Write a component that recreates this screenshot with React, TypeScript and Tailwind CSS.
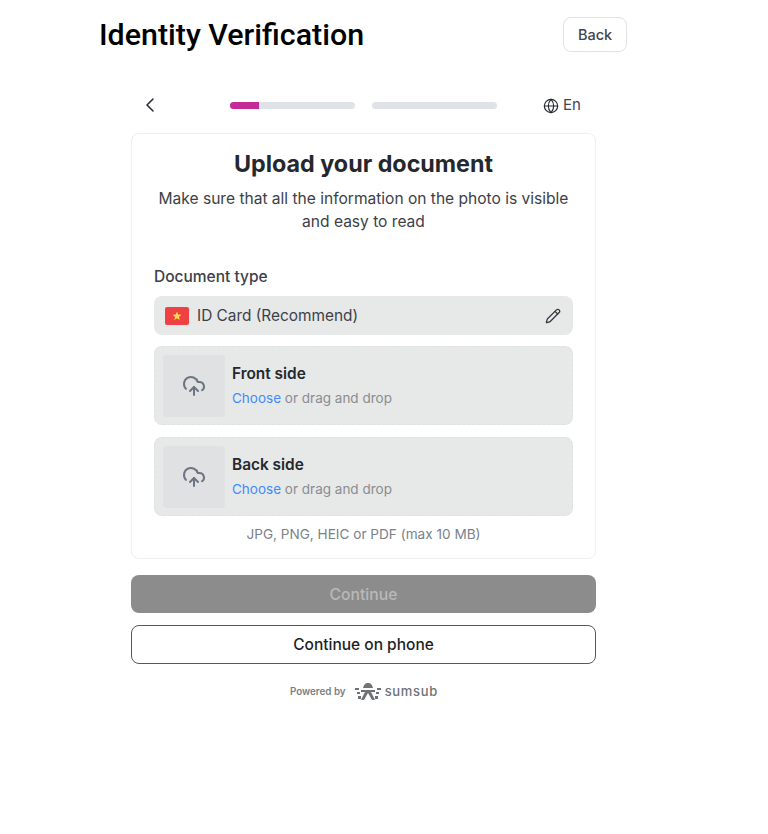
import { ChevronLeft, Globe, Pencil, CloudUpload } from "lucide-react";

function UploadBox({ label }: { label: string }) {
  return (
    <div className="flex h-[79px] items-center rounded-lg border border-dashed border-[#dfe1e3] bg-[#e7e8e8] pl-[8px]">
      <div className="flex h-[62px] w-[62px] items-center justify-center rounded bg-[#e0e1e2] text-[#6c7583]">
        <CloudUpload size={24} strokeWidth={2} />
      </div>
      <div className="ml-[7px]">
        <div className="text-[15.4px] leading-[22px] font-semibold text-[#24282e]">{label}</div>
        <div className="mt-[3px] text-[13.5px] leading-[20px] text-[#8b8d90]">
          <span className="text-[#3f8cff]">Choose</span> or drag and drop
        </div>
      </div>
    </div>
  );
}

function SumsubLogo() {
  return (
    <svg width="28" height="20" viewBox="0 0 28 20" className="text-[#6f7276]" fill="currentColor">
      <path d="M9 6 C10 2 12 1 14 1 C16 1 18 2 19 6 Z" />
      <rect x="1" y="6" width="4" height="2" />
      <rect x="23" y="6" width="4" height="2" />
      <rect x="3" y="10" width="3" height="2" />
      <rect x="22" y="10" width="3" height="2" />
      <path d="M7 8 H21 V10 H17 L21 18 H18 L14 11 L10 18 H7 L11 10 H7 Z" />
      <rect x="4" y="14" width="3" height="3" />
      <rect x="21" y="14" width="3" height="3" />
    </svg>
  );
}

export default function App() {
  return (
    <div className="min-h-[834px] bg-white font-['Inter',sans-serif]">
      <div className="ml-[99px] w-[528px] pt-[17px]">
        <div className="flex h-[35px] items-center justify-between">
          <h1 className="mt-[1px] font-['Roboto',sans-serif] text-[30.4px] font-medium text-black">Identity Verification</h1>
          <button className="h-[35px] w-[64px] rounded-lg border border-[#dfe2e6] bg-white text-[14.5px] font-medium text-[#3f4650]">
            Back
          </button>
        </div>

        <div className="mt-[36px] ml-[32px] w-[465px]">
          <div className="flex h-[34px] items-center">
            <div className="flex w-[99px] pl-[7px] text-[#2b2f36]">
              <ChevronLeft size={24} strokeWidth={1.6} />
            </div>
            <div className="flex h-[7px] w-[125px] overflow-hidden rounded-full bg-[#dfe2e6]">
              <div className="w-[29px] bg-[#c42b96]" />
            </div>
            <div className="ml-[17px] h-[7px] w-[125px] rounded-full bg-[#dfe2e6]" />
            <div className="ml-[46px] flex items-center gap-[4px] pt-[1px] text-[15px] text-[#3f4650]">
              <Globe size={16} strokeWidth={1.7} className="text-[#24282e]" />
              En
            </div>
          </div>

          <div className="mt-[11px] flex h-[426px] flex-col rounded-lg border border-[#eceef0] bg-white px-[22px]">
            <h2 className="mt-[14px] text-center text-[23.3px] leading-[32px] font-bold text-[#24282e]">
              Upload your document
            </h2>
            <p className="mt-[7px] text-center text-[15.55px] leading-[23px] text-[#3c4148]">
              Make sure that all the information on the photo is visible and easy to read
            </p>
            <div className="mt-[33px] text-[15.5px] leading-[22px] font-medium text-[#3c4148]">Document type</div>
            <div className="mt-[8px] flex h-[39px] items-center rounded-lg bg-[#e7e8e8] px-[11px] text-[15.4px] text-[#3c4148]">
              <svg width="24" height="18" viewBox="0 0 24 18" className="shrink-0">
                <rect width="24" height="18" rx="2" fill="#ef4044" />
                <path d="M12 4.5l1.2 3.1 3.3.2-2.6 2.1.9 3.2-2.8-1.8-2.8 1.8.9-3.2-2.6-2.1 3.3-.2z" fill="#ffe14d" />
              </svg>
              <span className="ml-[8px]">ID Card (Recommend)</span>
              <Pencil size={16} strokeWidth={1.9} className="ml-auto mr-[1px] text-[#33383f]" />
            </div>
            <div className="mt-[11px] flex flex-col gap-[12px]">
              <UploadBox label="Front side" />
              <UploadBox label="Back side" />
            </div>
            <div className="mt-[8px] text-center text-[13.6px] leading-[20px] text-[#7a828c]">
              JPG, PNG, HEIC or PDF (max 10 MB)
            </div>
          </div>

          <button className="mt-[16px] h-[38px] w-full rounded-lg bg-[#8c8c8d] pt-[1px] text-[15.7px] font-medium text-[#b9b9ba]">
            Continue
          </button>
          <button className="mt-[12px] h-[39px] w-full rounded-lg border border-[#55585c] bg-white text-[15.5px] font-medium text-[#1c1f24]">
            Continue on phone
          </button>

          <div className="mt-[18px] ml-[1px] flex items-center justify-center">
            <span className="text-[9.8px] font-semibold text-[#7b7e82]">Powered by</span>
            <span className="ml-[8px] flex items-center gap-[3px]">
              <SumsubLogo />
              <span className="text-[13px] font-medium tracking-[0.7px] text-[#6f7276]">sumsub</span>
            </span>
          </div>
        </div>
      </div>
    </div>
  );
}
